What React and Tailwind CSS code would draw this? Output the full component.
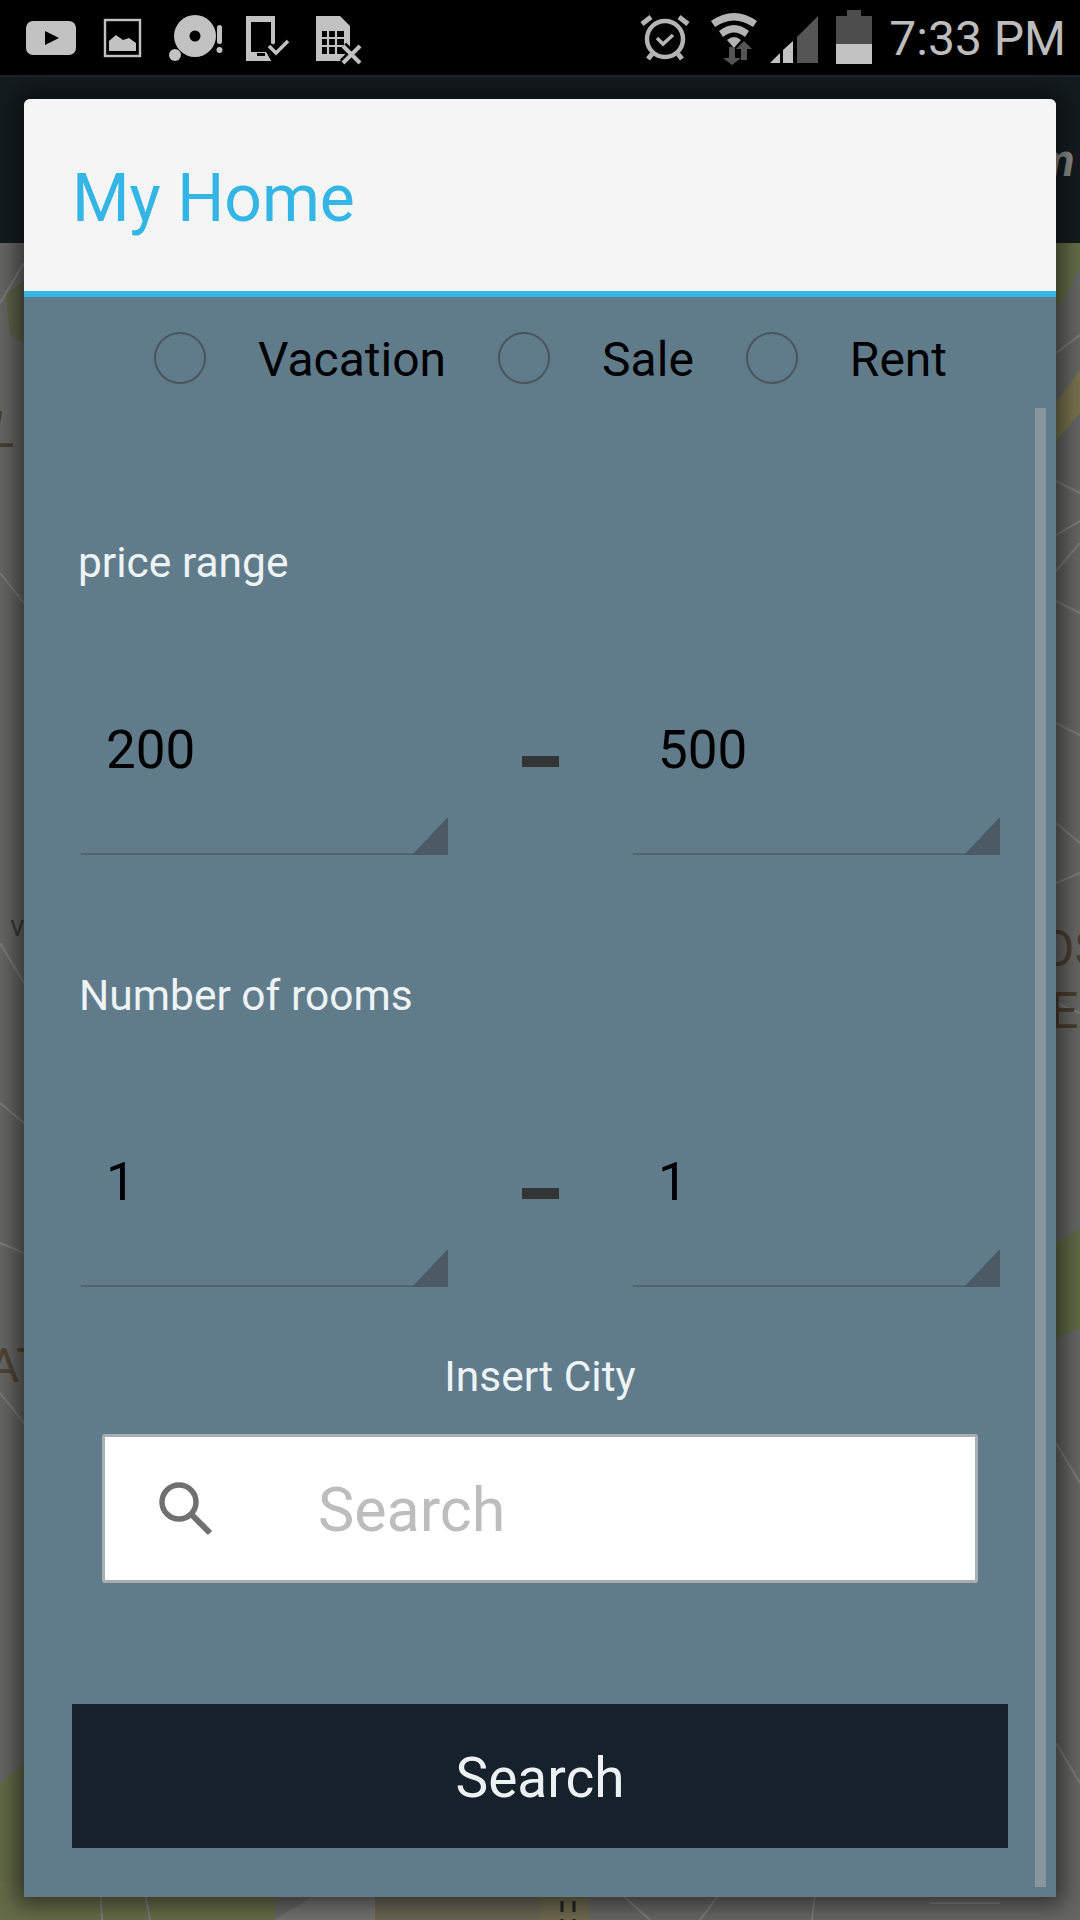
import React from "react";

const ROBOTO = "font-['Roboto',sans-serif]";

function Youtube() {
  return (
    <svg width="52" height="36" viewBox="0 0 52 36">
      <rect x="1" y="1" width="50" height="34" rx="7" fill="#c2c2c2" />
      <path d="M20 11 L34 18 L20 25 Z" fill="#000" />
    </svg>
  );
}
function Picture() {
  return (
    <svg width="40" height="40" viewBox="0 0 40 40">
      <rect x="2" y="2" width="35" height="36" fill="none" stroke="#c2c2c2" strokeWidth="2.4" />
      <path d="M6 33 V23 L13 17 L20 22 L26 20 L33 25 V33 Z" fill="#c2c2c2" />
    </svg>
  );
}
function Disc() {
  return (
    <svg width="56" height="48" viewBox="0 0 56 48">
      <circle cx="26" cy="21" r="21" fill="#c2c2c2" />
      <circle cx="26" cy="21" r="5.5" fill="#000" />
      <circle cx="6" cy="40" r="6" fill="#c2c2c2" />
      <rect x="48" y="10" width="5" height="19" rx="2.5" fill="#c2c2c2" />
      <circle cx="50.5" cy="35" r="3" fill="#c2c2c2" />
    </svg>
  );
}
function Tablet() {
  return (
    <svg width="46" height="48" viewBox="0 0 46 48">
      <path d="M1 1 H30 V28 L21 37 L26 46 H1 Z" fill="#c2c2c2" />
      <rect x="6" y="7" width="20" height="30" fill="#000" />
      <path d="M6 37 H21 L26 46 H6 Z" fill="#c2c2c2" />
      <rect x="12" y="38" width="8" height="3" fill="#000" />
      <path d="M24 31 L31 38 L43 26" fill="none" stroke="#000" strokeWidth="8" />
      <path d="M24 31 L31 38 L43 26" fill="none" stroke="#c2c2c2" strokeWidth="3.5" />
    </svg>
  );
}
function Sim() {
  return (
    <svg width="50" height="50" viewBox="0 0 50 50">
      <path d="M1 1 H25 L35 11 V46 H1 Z" fill="#c2c2c2" />
      <rect x="7" y="16" width="22" height="23" fill="#000" />
      <path d="M13 16 V39 M21 16 V39 M7 23 H29 M7 31 H29" stroke="#c2c2c2" strokeWidth="2.2" />
      <path d="M28 31 L45 48 M45 31 L28 48" stroke="#000" strokeWidth="9" />
      <path d="M28 31 L45 48 M45 31 L28 48" stroke="#c2c2c2" strokeWidth="4" />
    </svg>
  );
}
function Alarm() {
  return (
    <svg width="50" height="50" viewBox="0 0 50 50">
      <circle cx="25" cy="26" r="18" fill="none" stroke="#b4b4b4" strokeWidth="4.5" />
      <path d="M2 11 L11 4 M48 11 L39 4" stroke="#b4b4b4" strokeWidth="5" />
      <path d="M8 46 L12 41 M42 46 L38 41" stroke="#b4b4b4" strokeWidth="5" />
      <path d="M17 25 L23 31 L33 22" fill="none" stroke="#b4b4b4" strokeWidth="3.5" />
    </svg>
  );
}
function Wifi() {
  return (
    <svg width="50" height="54" viewBox="0 0 50 54">
      <path d="M2 10 Q25 -6 48 10 L44 16 Q25 3 6 16 Z" fill="#b4b4b4" />
      <path d="M10 20 Q25 8 40 20 L36 26 Q25 17 14 26 Z" fill="#b4b4b4" />
      <path d="M18 29 Q25 23 32 29 L25 37 Z" fill="#b4b4b4" />
      <path d="M20 36 H26 V47 H32 L23 54 L14 47 H20 Z" fill="#555" />
      <path d="M32 49 V38 H27 L35 30 L43 38 H38 V49 Z" fill="#555" />
    </svg>
  );
}
function Signal() {
  return (
    <svg width="48" height="48" viewBox="0 0 48 48">
      <path d="M0 48 L10 38 V48 Z" fill="#c2c2c2" />
      <path d="M13 35 L23 26 V48 H13 Z" fill="#c2c2c2" />
      <path d="M27 22 L48 1 V48 H27 Z" fill="#555" />
    </svg>
  );
}
function Battery() {
  return (
    <svg width="36" height="54" viewBox="0 0 36 54">
      <rect x="11" y="0" width="14" height="7" fill="#4d4d4d" />
      <rect x="0" y="6" width="36" height="28" fill="#4d4d4d" />
      <rect x="0" y="34" width="36" height="20" fill="#c2c2c2" />
    </svg>
  );
}

function StatusBar() {
  return (
    <div className={`flex h-[75px] items-center bg-black ${ROBOTO}`}>
      <div className="ml-[25px] mt-[1px]"><Youtube /></div>
      <div className="ml-[26px]"><Picture /></div>
      <div className="ml-[26px] mt-[3px]"><Disc /></div>
      <div className="ml-[20px] mt-[3px]"><Tablet /></div>
      <div className="ml-[24px] mt-[5px]"><Sim /></div>
      <div className="ml-auto mt-[1px]"><Alarm /></div>
      <div className="ml-[19px] mt-[1px]"><Wifi /></div>
      <div className="ml-[11px] mt-[3px]"><Signal /></div>
      <div className="ml-[18px] mt-[-2px]"><Battery /></div>
      <div className="ml-[17px] mr-[14px] mt-[3px] text-[48px] font-normal leading-[60px] text-[#bdbdbd]">7:33 PM</div>
    </div>
  );
}

function MapBackdrop() {
  return (
    <svg className="h-full w-full" viewBox="0 0 1080 1677" preserveAspectRatio="none">
      <rect width="1080" height="1677" fill="#666665" />
      <path d="M6 50 L24 38 V100 L10 92 Z" fill="#5d6349" />
      <path d="M1056 0 H1080 V24 L1062 60 L1056 62 Z" fill="#636d47" />
      <path d="M1056 160 L1080 126 V170 L1056 198 Z" fill="#77734f" />
      <path d="M1056 1000 L1080 985 V1085 L1056 1095 Z" fill="#5f6a47" />
      <path d="M0 1540 L24 1520 V1677 H0 Z" fill="#636a48" />
      <path d="M0 1640 H275 V1677 H0 Z" fill="#666c49" />
      <path d="M275 1677 L315 1652 L350 1654 L375 1640 V1677 Z" fill="#737372" />
      <path d="M375 1640 H540 V1677 H375 Z" fill="#6a6655" />
      <path d="M540 1640 H590 V1677 H540 Z" fill="#6e6a50" />
      <path d="M0 60 L24 20 M0 330 L24 360 M0 700 L24 740 M0 860 L24 880 M0 1000 L24 1010 M0 1150 L24 1180 M1056 110 L1080 92 M1056 238 L1080 250 M1056 292 L1080 278 M1056 328 L1080 300 M1056 358 L1080 370 M1056 480 L1080 492 M1056 580 L1080 600 M1056 640 L1080 630 M1056 760 L1080 770 M1056 1200 L1080 1240 M1056 1500 L1080 1540 M100 1645 L102 1677 M145 1650 L150 1677 M620 1650 L650 1677 M720 1650 L700 1677 M815 1650 L812 1677 M930 1660 H1000" stroke="#7c7c7b" strokeWidth="2" fill="none" />
      <path d="M562 1640 V1677 M574 1640 V1677" stroke="#232323" strokeWidth="3" strokeDasharray="11 7" />
    </svg>
  );
}

function Radio({ label, gap }) {
  return (
    <div className="flex h-[52px] items-center" style={{ marginRight: gap }}>
      <div className="h-[52px] w-[52px] rounded-full border-2 border-[#4a555d]" />
      <span className="ml-[52px] translate-y-[2px] text-[48px] leading-[52px] text-black">{label}</span>
    </div>
  );
}

function Field({ value }) {
  return (
    <div className="relative h-[140px] w-[367px] border-b-2 border-[#4f6673] pl-[25px]">
      <span className="block text-[53px] leading-[70px] text-black">{value}</span>
      <svg className="absolute bottom-[-2px] right-0" width="36" height="38" viewBox="0 0 36 38">
        <path d="M0 38 L36 0 V38 Z" fill="#4b5a64" />
      </svg>
    </div>
  );
}

function RangeRow({ a, b, className }) {
  return (
    <div className={`ml-[57px] flex ${className}`}>
      <Field value={a} />
      <div className="flex w-[185px] justify-center pt-[41px]">
        <div className="h-[11px] w-[37px] bg-[#333537]" />
      </div>
      <Field value={b} />
    </div>
  );
}

function Dialog() {
  return (
    <div className={`absolute left-[24px] top-[99px] flex h-[1798px] w-[1032px] flex-col overflow-hidden rounded-t-[6px] bg-[#607c8b] shadow-[0_0_22px_8px_rgba(0,0,0,0.5)] ${ROBOTO}`}>
      <div className="flex h-[198px] items-center border-b-[6px] border-[#33b5e5] bg-[#f5f5f5] pl-[48px] pt-[8px]">
        <span className="text-[66px] leading-[80px] text-[#33b5e5]">My Home</span>
      </div>
      <div className="ml-[130px] mt-[35px] flex">
        <Radio label="Vacation" gap="52px" />
        <Radio label="Sale" gap="52px" />
        <Radio label="Rent" gap="0px" />
      </div>
      <div className="ml-[54px] mt-[157px] text-[42.5px] leading-[44px] text-[#eef3f6]">price range</div>
      <RangeRow a="200" b="500" className="mt-[130px]" />
      <div className="ml-[55px] mt-[119px] text-[42.5px] leading-[44px] text-[#eef3f6]">Number of rooms</div>
      <RangeRow a="1" b="1" className="mt-[129px]" />
      <div className="mt-[68px] text-center text-[42.5px] leading-[44px] text-[#eef3f6]">Insert City</div>
      <div className="ml-[78px] mt-[35px] flex h-[149px] w-[876px] items-center rounded-[3px] border-[3px] border-[#a9aeb1] bg-white">
        <svg className="ml-[54px]" width="54" height="54" viewBox="0 0 54 54">
          <circle cx="20" cy="20" r="17" fill="none" stroke="#707070" strokeWidth="5.5" />
          <path d="M32 32 L51 51" stroke="#707070" strokeWidth="6" />
        </svg>
        <span className="ml-[105px] mt-[2px] text-[61px] leading-[70px] text-[#bdbdbd]">Search</span>
      </div>
      <div className="ml-[48px] mt-[121px] flex h-[144px] w-[936px] items-center justify-center bg-[#17212b] pt-[4px] text-[55px] text-[#eef1f3]">
        Search
      </div>
      <div className="absolute bottom-[10px] right-[10px] top-[309px] w-[11px] bg-[#8a969e]" />
    </div>
  );
}

export default function App() {
  return (
    <div className="relative flex h-[1920px] w-[1080px] flex-col overflow-hidden bg-[#666665]">
      <StatusBar />
      <div className="h-[168px] border-t-2 border-[#1c2529] bg-[#141c20]" />
      <div className="min-h-0 flex-1"><MapBackdrop /></div>
      <span className="absolute left-[1036px] top-[134px] font-['Roboto',sans-serif] text-[46px] font-bold italic leading-[52px] text-[#8b8b8b]">m</span>
      <span className="absolute left-[-10px] top-[402px] font-['Roboto',sans-serif] text-[50px] italic leading-[56px] text-[#4a3d30]">L</span>
      <span className="absolute left-[10px] top-[908px] font-['Roboto',sans-serif] text-[30px] leading-[36px] text-[#3e3a36]">v</span>
      <span className="absolute left-[-12px] top-[1340px] font-['Roboto',sans-serif] text-[48px] leading-[52px] text-[#4f4334]">AT</span>
      <span className="absolute left-[1040px] top-[922px] font-['Roboto',sans-serif] text-[50px] leading-[54px] text-[#4a3d30]">OS</span>
      <span className="absolute left-[1050px] top-[984px] font-['Roboto',sans-serif] text-[50px] leading-[54px] text-[#4a3d30]">EA</span>
      <Dialog />
    </div>
  );
}
